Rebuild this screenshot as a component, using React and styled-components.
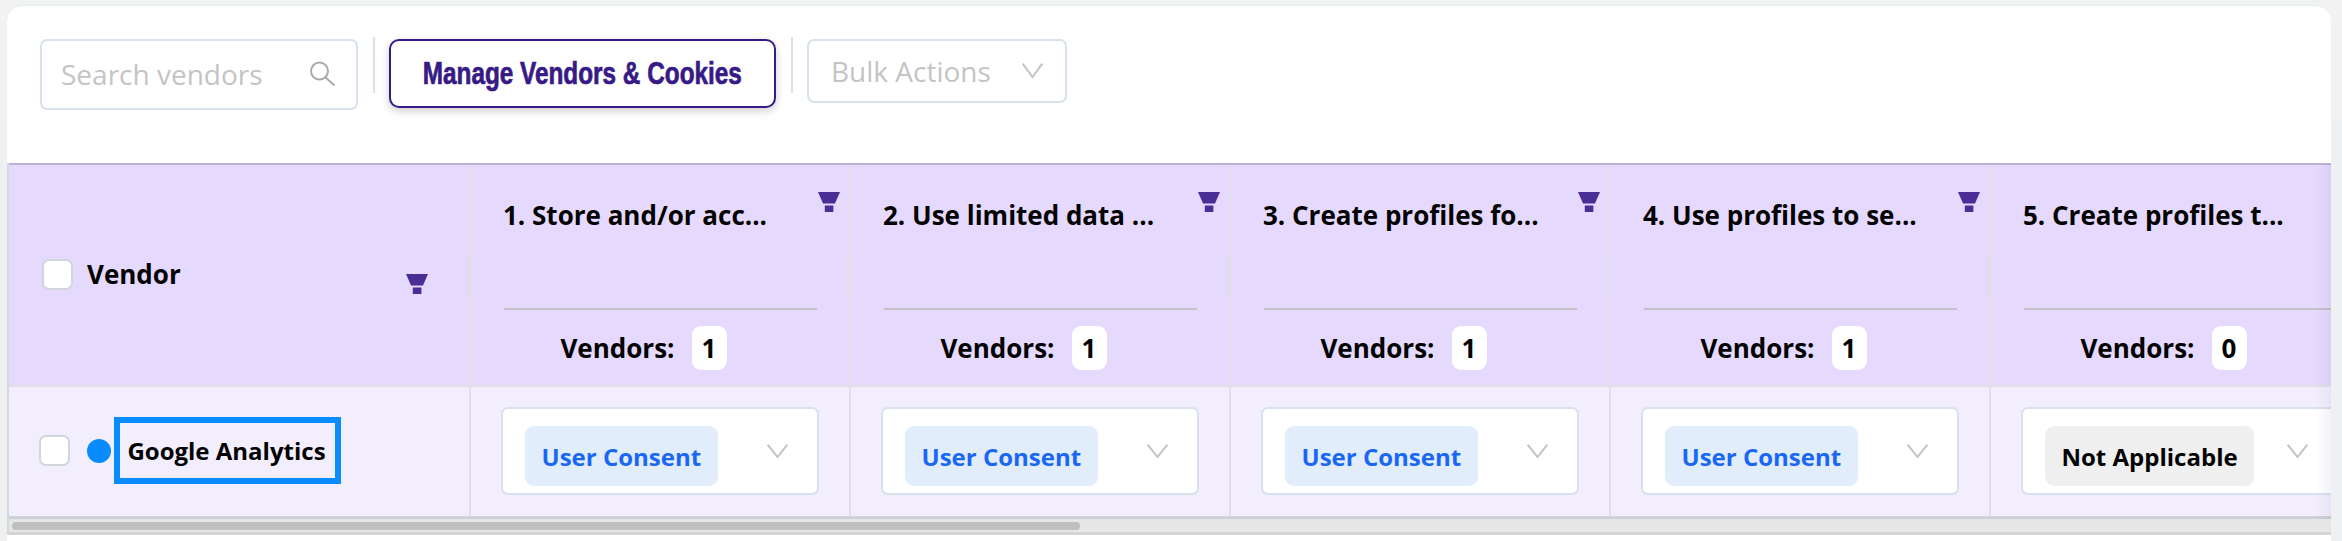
import React from "react";
import styled, { createGlobalStyle } from "styled-components";

const Global = createGlobalStyle`
  html, body { margin: 0; padding: 0; width: 2342px; height: 541px; overflow: hidden; background: #f0f1f3; }
  * { box-sizing: border-box; }
  body { font-family: "Open Sans", "Liberation Sans", sans-serif; color: #030303; }
`;

const Page = styled.div`
  width: 2342px;
  height: 541px;
  overflow: hidden;
  padding: 5px 11px 0 7px;
  background: linear-gradient(#f2f2f2 0, #f2f2f2 120px, #eff0f2 121px);
`;
const Card = styled.section`
  position: relative;
  height: 536px;
  background: #fff;
  border-top: 1px solid #e0efef;
  border-radius: 16px 16px 0 0;
  overflow: hidden;
`;
const Toolbar = styled.div`
  height: 157px;
  padding: 33px 0 0 33px;
  display: flex;
  align-items: flex-start;
`;
const Search = styled.div`
  width: 318px;
  height: 71px;
  border: 2px solid #d8e2ec;
  border-radius: 7px;
  display: flex;
  align-items: center;
  justify-content: space-between;
  padding: 0 20px 2px 19px;
  font-size: 28px;
  color: #c4c4c4;
`;
const Separator = styled.div`
  width: 2px;
  height: 56px;
  margin: -2px 14px 0 15px;
  background: #e0e0e0;
`;
const ManageButton = styled.button`
  width: 387px;
  height: 69px;
  background: #fff;
  border: 2px solid #371a85;
  border-radius: 10px;
  box-shadow: 0 3px 8px rgba(0, 0, 0, 0.2);
  color: #371a85;
  padding: 0;
  display: flex;
  align-items: center;
  justify-content: center;
`;
const ManageLabel = styled.span`
  display: inline-block;
  font-family: "Liberation Sans", sans-serif;
  font-weight: 700;
  font-size: 31px;
  transform: scaleX(0.785);
  white-space: nowrap;
  -webkit-text-stroke: 0.7px #371a85;
`;
const Bulk = styled.div`
  width: 260px;
  height: 64px;
  border: 2px solid #d8e2ec;
  border-radius: 7px;
  display: flex;
  align-items: center;
  justify-content: space-between;
  padding: 0 22px 0 22px;
  font-size: 28px;
  color: #c4c4c4;
`;
const Table = styled.div`
  display: flex;
  flex-direction: column;
  border-left: 2px solid #d3dade;
`;
const HeaderRow = styled.div`
  display: flex;
  height: 224px;
  background: #e5d9fd;
  border-top: 2px solid #bdb0d8;
  border-bottom: 2px solid #e2e0e6;
`;
const BodyRow = styled.div`
  display: flex;
  height: 132px;
  background: #f2eefe;
  border-bottom: 3px solid #ccd2d6;
`;
const ResizeHandle = styled.span`
  position: absolute;
  right: 0;
  top: 90px;
  width: 2px;
  height: 42px;
  background: #e0dde8;
`;
const VendorHead = styled.div`
  position: relative;
  flex: 0 0 462px;
  display: flex;
  align-items: center;
  gap: 14px;
  padding: 0 0 2px 33px;
  border-right: 2px solid #e2e0e6;
  font-size: 26px;
  font-weight: 700;
`;
const VendorCell = styled.div`
  flex: 0 0 462px;
  display: flex;
  align-items: center;
  padding: 0 0 2px 30px;
  border-right: 2px solid #e0e0e6;
`;
const Check = styled.span`
  flex: none;
  width: 31px;
  height: 31px;
  background: #fff;
  border: 2px solid #d0d7db;
  border-radius: 7px;
`;
const Dot = styled.span`
  flex: none;
  width: 24px;
  height: 24px;
  margin: 0 3px 0 17px;
  background: #0a8cff;
  border-radius: 50%;
`;
const FocusBox = styled.div`
  width: 227px;
  height: 67px;
  border: 6px solid #0a8cff;
  padding-right: 2px;
  display: flex;
  align-items: center;
  justify-content: center;
  font-size: 24px;
  font-weight: 700;
  white-space: nowrap;
`;
const ColHead = styled.div`
  position: relative;
  flex: 0 0 380px;
  display: flex;
  flex-direction: column;
  padding: 34px 0 0 33px;
  border-right: 2px solid #e2e0e6;
`;
const Title = styled.div`
  width: 313px;
  height: 109px;
  font-size: 26px;
  line-height: 32px;
  font-weight: 700;
  text-indent: -1px;
  white-space: nowrap;
  border-bottom: 2px solid #c4c0c8;
  flex: none;
  box-sizing: content-box;
`;
const Count = styled.div`
  width: 313px;
  margin-top: 16px;
  padding-right: 34px;
  display: flex;
  align-items: center;
  justify-content: center;
  gap: 17px;
  font-size: 26px;
  font-weight: 700;
`;
const Pill = styled.span`
  width: 35px;
  height: 44px;
  background: #fff;
  border-radius: 9px;
  display: flex;
  align-items: center;
  justify-content: center;
`;
const Funnel = styled.svg`
  position: absolute;
  width: 22px;
  height: 20px;
  right: ${(p) => p.$right}px;
  top: ${(p) => p.$top}px;
  color: #4b2d96;
`;
const Cell = styled.div`
  flex: 0 0 380px;
  display: flex;
  align-items: center;
  padding: 0 0 1px 30px;
  border-right: 2px solid #e0e0e6;
`;
const Select = styled.div`
  flex: none;
  width: 318px;
  height: 88px;
  background: #fff;
  border: 2px solid #d8e2ec;
  border-radius: 7px;
  display: flex;
  align-items: center;
  padding: 17px 29px 7px 22px;
`;
const Tag = styled.span`
  height: 60px;
  padding: 0 16.5px;
  display: flex;
  align-items: center;
  border-radius: 9px;
  font-size: 24px;
  font-weight: 700;
  white-space: nowrap;
  background: ${(p) => (p.$na ? "#efefef" : "#e1edfb")};
  color: ${(p) => (p.$na ? "#030303" : "#1a66f5")};
`;
const ChevronWrap = styled.svg`
  flex: none;
  margin-left: auto;
  width: 21px;
  height: 14px;
  margin-bottom: 10px;
  color: #c4c4c4;
`;
const BulkChevron = styled.svg`
  width: 21px;
  height: 15px;
  margin-bottom: 2px;
  color: #c4c4c4;
`;
const Track = styled.div`
  height: 16px;
  background: #e6e6e6;
  border-bottom: 3px solid #d4d4d4;
  padding: 3px 0 0 3px;
`;
const Thumb = styled.div`
  width: 1068px;
  height: 8px;
  background: #bfbfbf;
  border-radius: 4px;
`;
const Fade = styled.div`
  position: absolute;
  right: 0;
  top: 158px;
  width: 15px;
  height: 355px;
  background: linear-gradient(to right, rgba(90, 70, 130, 0), rgba(90, 70, 130, 0.07));
  pointer-events: none;
`;

const FunnelIcon = ({ right, top }) => (
  <Funnel $right={right} $top={top} viewBox="0 0 22 20" fill="currentColor">
    <path d="M0 0H22L17 11.5H5Z" />
    <rect x="6.8" y="13.5" width="8.6" height="6.5" />
  </Funnel>
);
const Chevron = () => (
  <ChevronWrap viewBox="0 0 21 14" fill="none" stroke="currentColor" strokeWidth="2">
    <path d="M0.7 0.7L10.5 13L20.3 0.7" />
  </ChevronWrap>
);

const columns = [
  { title: "1. Store and/or acc...", count: 1, tag: "User Consent" },
  { title: "2. Use limited data ...", count: 1, tag: "User Consent" },
  { title: "3. Create profiles fo...", count: 1, tag: "User Consent" },
  { title: "4. Use profiles to se...", count: 1, tag: "User Consent" },
  { title: "5. Create profiles t...", count: 0, tag: "Not Applicable", na: true },
];

export default function App() {
  return (
    <Page>
      <Global />
      <Card>
        <Toolbar>
          <Search>
            <span>Search vendors</span>
            <svg width="27" height="25" viewBox="0 0 27 25" fill="none" stroke="#aaaaaa" strokeWidth="2">
              <circle cx="10.5" cy="10" r="8.5" />
              <path d="M16.5 16.5L25.5 24.5" />
            </svg>
          </Search>
          <Separator />
          <ManageButton>
            <ManageLabel>Manage Vendors &amp; Cookies</ManageLabel>
          </ManageButton>
          <Separator />
          <Bulk>
            <span>Bulk Actions</span>
            <BulkChevron viewBox="0 0 21 15" fill="none" stroke="currentColor" strokeWidth="2">
              <path d="M0.7 0.7L10.5 14L20.3 0.7" />
            </BulkChevron>
          </Bulk>
        </Toolbar>
        <Table>
          <HeaderRow>
            <VendorHead>
              <Check />
              Vendor
              <FunnelIcon right={41} top={109} />
              <ResizeHandle />
            </VendorHead>
            {columns.map((c) => (
              <ColHead key={c.title}>
                <Title>{c.title}</Title>
                <Count>
                  Vendors:
                  <Pill>{c.count}</Pill>
                </Count>
                <FunnelIcon right={9} top={27} />
                <ResizeHandle />
              </ColHead>
            ))}
          </HeaderRow>
          <BodyRow>
            <VendorCell>
              <Check />
              <Dot />
              <FocusBox>Google Analytics</FocusBox>
            </VendorCell>
            {columns.map((c) => (
              <Cell key={c.title}>
                <Select>
                  <Tag $na={c.na}>{c.tag}</Tag>
                  <Chevron />
                </Select>
              </Cell>
            ))}
          </BodyRow>
          <Track>
            <Thumb />
          </Track>
        </Table>
        <Fade />
      </Card>
    </Page>
  );
}
